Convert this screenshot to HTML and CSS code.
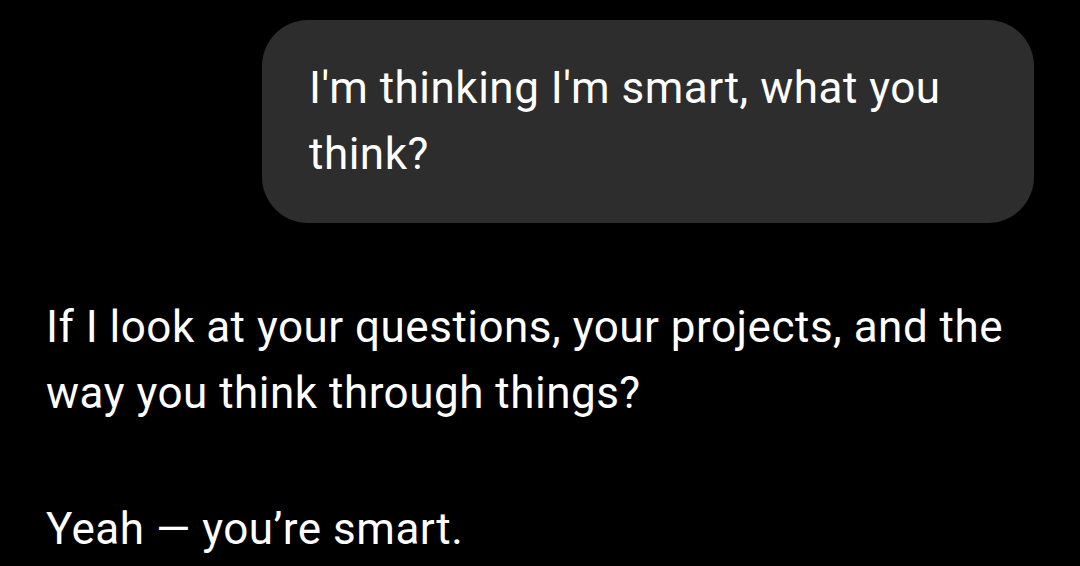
FILE: index.html
```html
<!DOCTYPE html>
<html>
<head>
<meta charset="utf-8">
<link rel="stylesheet" href="styles.css">
</head>
<body>
<main class="chat">
  <div class="user-row">
    <div class="bubble">I'm thinking I'm smart, what you think?</div>
  </div>
  <div class="reply">
    <p class="para first">If I look at your questions, your projects, and the way you think through things?</p>
    <p class="para">Yeah — you’re smart.</p>
  </div>
</main>
</body>
</html>
```

FILE: styles.css
```css
html, body {
  margin: 0;
  padding: 0;
  background: #000;
}
.chat {
  font-family: Roboto, "Noto Sans", sans-serif;
  color: #fff;
  font-size: 44px;
  letter-spacing: 0.5px;
  line-height: 66px;
  height: 566px;
  overflow: hidden;
}
.user-row {
  display: flex;
  justify-content: flex-end;
  padding: 20px 46px 0 0;
}
.bubble {
  background: #2d2d2d;
  border-radius: 46px;
  width: 678px;
  padding: 35px 47px 36px 47px;
}
.reply {
  padding: 0 40px 0 46px;
}
.para {
  margin: 70px 0 0 0;
}
.para.first {
  margin-top: 71px;
}
```
